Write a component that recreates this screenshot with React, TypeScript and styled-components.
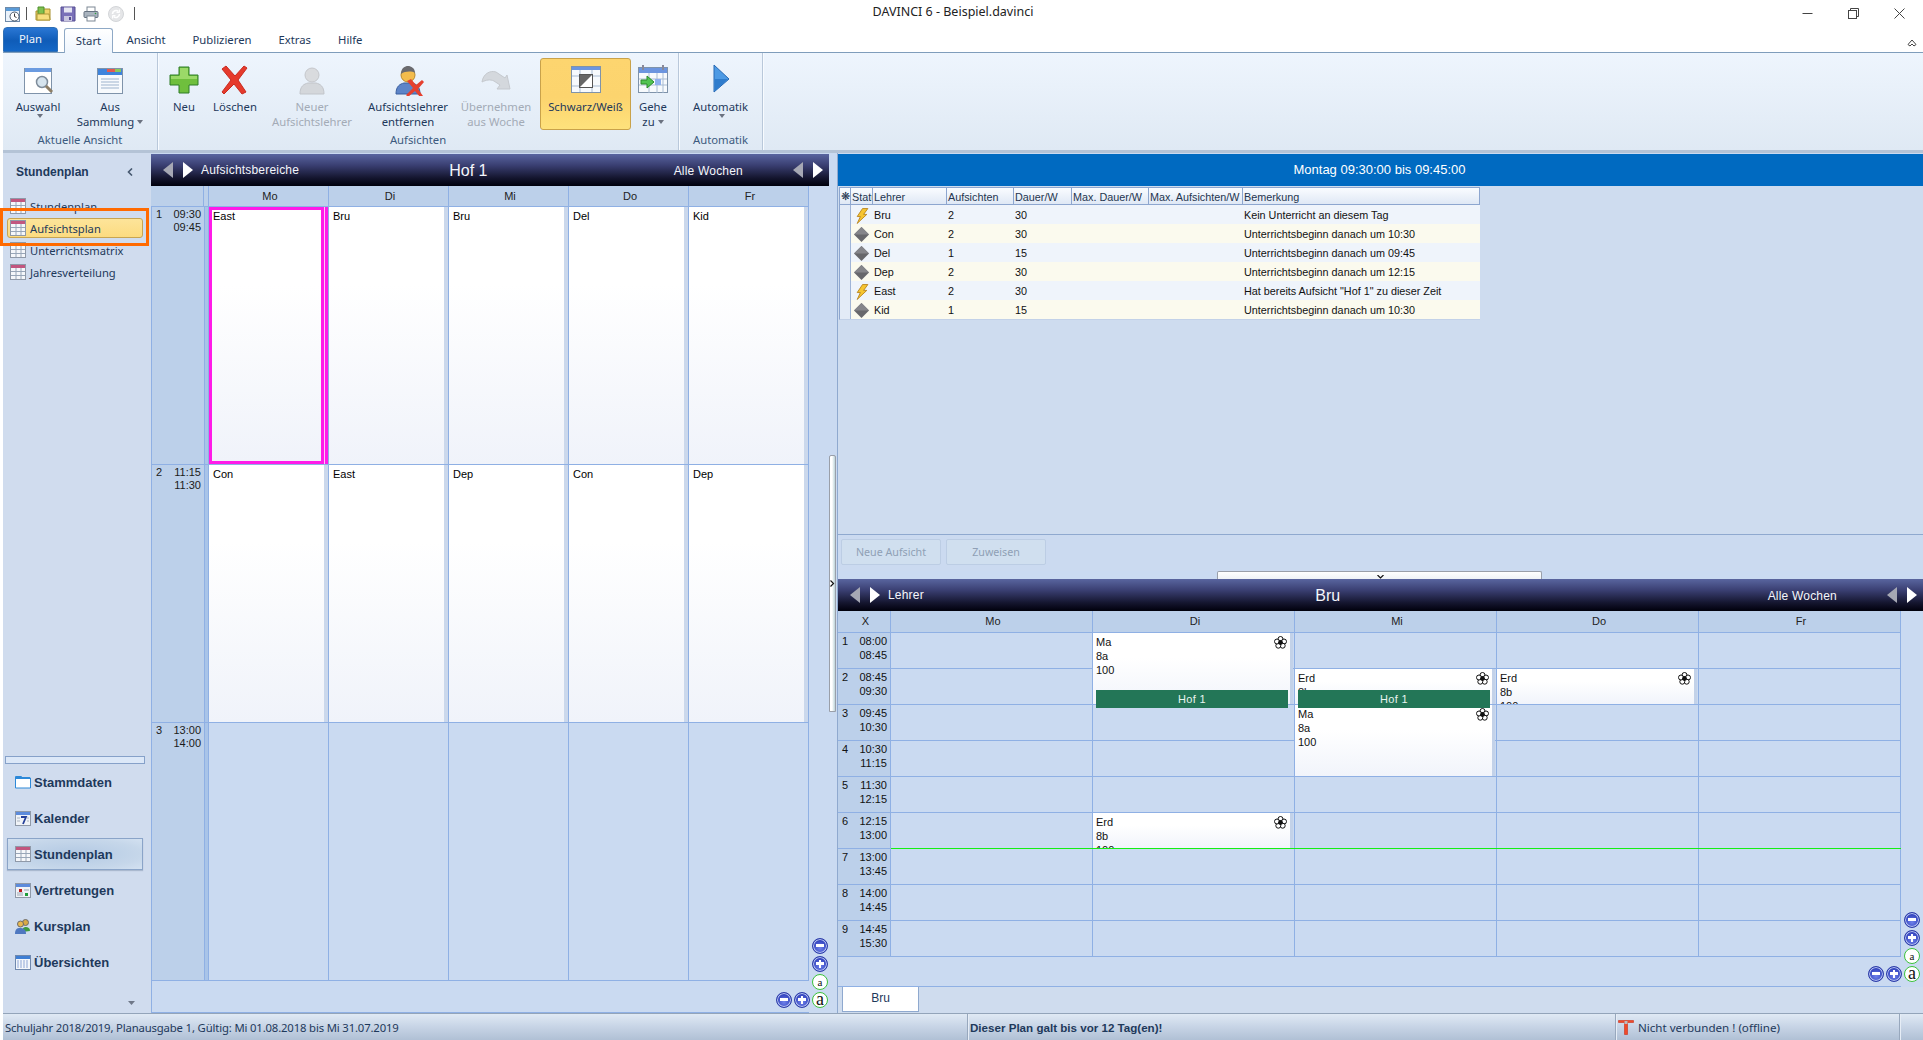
import React from "react";
import styled, { createGlobalStyle } from "styled-components";

const GlobalStyle = createGlobalStyle`
  html, body {
    margin: 0;
    padding: 0;
    width: 1923px;
    height: 1040px;
    overflow: hidden;
    background: #fff;
    font-family: "Liberation Sans", Arial, sans-serif;
  }
  * { box-sizing: border-box; }
`;

const uiFont = `"Noto Sans", "Liberation Sans", sans-serif`;
const gridLine = "#8fb0e4";
const gridBg = "#cadaf1";
const timeBg = "#bcd0ea";
const inkBlue = "#1e395b";

const Window = styled.div`
  width: 1923px;
  height: 1040px;
  display: flex;
  flex-direction: column;
  overflow: hidden;
`;

/* title bar */
const TitleBar = styled.div`
  height: 27px;
  display: flex;
  align-items: center;
  padding-left: 5px;
  position: relative;
  font-family: ${uiFont};
`;
const QuickIcon = styled.span<{ $gap?: number }>`
  display: flex;
  margin-left: ${(p) => p.$gap ?? 0}px;
`;
const QuickSep = styled.span<{ $gap: number }>`
  width: 1px;
  height: 13px;
  background: #555;
  margin-left: ${(p) => p.$gap}px;
`;
const TitleText = styled.div`
  position: absolute;
  left: 0;
  right: 17px;
  top: 3px;
  text-align: center;
  font-size: 12.5px;
  line-height: 18px;
  color: #222;
  pointer-events: none;
`;
const WindowButtons = styled.div`
  margin-left: auto;
  display: flex;
  align-items: center;
  gap: 35px;
  padding-right: 18px;
  margin-top: -1px;
`;

/* tabs */
const TabRow = styled.div`
  height: 25px;
  display: flex;
  align-items: flex-end;
  padding-left: 3px;
  font-family: ${uiFont};
  font-size: 11.3px;
  color: ${inkBlue};
  position: relative;
`;
const PlanTab = styled.div`
  width: 55px;
  height: 25px;
  margin-right: 6px;
  border-radius: 4px 4px 0 0;
  background: linear-gradient(#2a77d4, #0f5cb8 55%, #1467c6);
  border: 1px solid #2f6fb5;
  color: #f2f6fb;
  text-align: center;
  line-height: 21px;
`;
const StartTab = styled.div`
  width: 49px;
  height: 25px;
  margin-bottom: -1px;
  z-index: 1;
  background: linear-gradient(#fff, #eef5fd);
  border: 1px solid #8fa9c6;
  border-bottom: 0;
  border-radius: 3px 3px 0 0;
  text-align: center;
  line-height: 24px;
`;
const Tab = styled.div`
  padding: 0 13.5px;
  line-height: 24px;
`;
const CollapseIcon = styled.span`
  margin-left: auto;
  padding-right: 6px;
  display: flex;
  padding-bottom: 5px;
`;

/* ribbon */
const Ribbon = styled.div`
  height: 101px;
  margin-left: 3px;
  display: flex;
  background: linear-gradient(#eef5fd, #dfe9f4);
  border-top: 1px solid #7f9dbb;
  border-bottom: 3px solid #b4c3d6;
  font-family: ${uiFont};
  font-size: 11.3px;
  color: ${inkBlue};
`;
const RibbonGroup = styled.div<{ $w: number }>`
  width: ${(p) => p.$w}px;
  display: flex;
  flex-direction: column;
  padding-top: 5px;
  border-right: 1px solid #b9c8da;
  box-shadow: 1px 0 0 #f7fbff;
`;
const GroupButtons = styled.div`
  display: flex;
  height: 72px;
`;
const GroupLabel = styled.div`
  text-align: center;
  line-height: 16px;
  margin-top: 2px;
  color: #3c5a7e;
`;
const RibbonButton = styled.div<{ $w: number; $off?: boolean; $on?: boolean }>`
  width: ${(p) => p.$w}px;
  display: flex;
  flex-direction: column;
  align-items: center;
  padding-top: 6px;
  text-align: center;
  line-height: 15px;
  color: ${(p) => (p.$off ? "#a3abb6" : inkBlue)};
  border-radius: 3px;
  border: 1px solid ${(p) => (p.$on ? "#c9a24a" : "transparent")};
  background: ${(p) => (p.$on ? "linear-gradient(#fdd56f, #fcd46e 55%, #fee27c)" : "none")};
`;
const RibbonIcon = styled.span`
  height: 32px;
  margin-bottom: 3px;
  margin-top: -1px;
  display: flex;
`;
const Caret = styled.i`
  display: inline-block;
  width: 0;
  height: 0;
  margin-left: 3px;
  vertical-align: 2px;
  border: 3px solid transparent;
  border-top: 4px solid #6b7280;
  border-bottom: 0;
`;

/* main area */
const Main = styled.div`
  height: 860px;
  margin-left: 3px;
  display: flex;
`;

const Sidebar = styled.aside`
  width: 148px;
  display: flex;
  flex-direction: column;
  background: #d0dcee;
  color: ${inkBlue};
  position: relative;
`;
const SideHead = styled.div`
  height: 38px;
  padding: 0 18px 0 13px;
  display: flex;
  align-items: center;
  justify-content: space-between;
  font-size: 12px;
  font-weight: bold;
  margin-bottom: 4px;
`;
const PlanItem = styled.div<{ $on?: boolean }>`
  height: 22px;
  display: flex;
  align-items: center;
  gap: 4px;
  padding: 0 0 0 3px;
  margin: 0 8px 0 4px;
  font-family: ${uiFont};
  font-size: 11.2px;
  border-radius: 3px;
  ${(p) =>
    p.$on &&
    `height: 20px; margin-top: 1px; margin-bottom: 1px;
     background: linear-gradient(#fde49a, #fcdb80);
     border: 1px solid #c8a551; padding-left: 2px;`}
`;
const Annotation = styled.div`
  position: absolute;
  left: -3px;
  top: 55px;
  width: 149px;
  height: 38px;
  border: 3px solid #ff6a00;
  pointer-events: none;
`;
const Sash = styled.div`
  margin: auto 6px 0 2px;
  height: 8px;
  background: #dce8f8;
  border: 1px solid #86a1c9;
`;
const NavItem = styled.div<{ $on?: boolean }>`
  height: 32px;
  margin: 2px 8px 2px 4px;
  padding-left: 7px;
  display: flex;
  align-items: center;
  gap: 3px;
  font-size: 13px;
  font-weight: bold;
  border: 1px solid ${(p) => (p.$on ? "#8aa4c8" : "transparent")};
  background: ${(p) =>
    p.$on ? "radial-gradient(ellipse at center, #b3c9e3, #c6d7ea 70%, #d3e1f1)" : "none"};
  box-shadow: ${(p) => (p.$on ? "0 1px 1px #aab9cf" : "none")};
`;
const SideMore = styled.div`
  height: 33px;
  padding: 11px 0 0 125px;
`;

/* header band used by both schedule panels */
const Band = styled.div`
  height: 32px;
  display: flex;
  align-items: center;
  padding: 0 0 0 12px;
  background: linear-gradient(#59659f, #3a3f72 35%, #14152e 75%, #00000c);
  color: #f4f6fb;
  font-size: 12px;
`;
const BandArrow = styled.i<{ $left?: boolean; $off?: boolean }>`
  width: 0;
  height: 0;
  margin-right: 10px;
  border-top: 8px solid transparent;
  border-bottom: 8px solid transparent;
  ${(p) =>
    p.$left
      ? `border-right: 10px solid ${p.$off ? "#a6a8b4" : "#fff"};`
      : `border-left: 10px solid #fff;`}
`;
const BandSub = styled.span`
  margin-left: -2px;
  margin-top: -1px;
  letter-spacing: 0.2px;
`;
const BandTitle = styled.div`
  flex: 1;
  padding: 1px 36px 0 0;
  text-align: center;
  font-size: 16px;
`;
const BandWeeks = styled.span`
  margin: 1px 50px 0 0;
  letter-spacing: 0.2px;
`;
const ArrowPair = styled.span<{ $end?: boolean }>`
  display: flex;
  align-items: center;
  margin-right: ${(p) => (p.$end ? -4 : 0)}px;
`;

/* left schedule */
const LeftPanel = styled.section`
  width: 678px;
  padding-top: 1px;
  display: flex;
  flex-direction: column;
  background: ${gridBg};
  position: relative;
`;
const DutyGrid = styled.div`
  width: 658px;
  display: grid;
  grid-template-columns: 53px 5px repeat(5, 120px);
  grid-template-rows: 21px repeat(3, 258px);
  font-size: 11px;
`;
const DayHead = styled.div`
  background: ${timeBg};
  border-right: 1px solid ${gridLine};
  border-bottom: 1px solid ${gridLine};
  padding-left: 3px;
  text-align: center;
  line-height: 21px;
  font-size: 11px;
  color: #222;
`;
const TimeCell = styled.div`
  background: ${timeBg};
  border-left: 1px solid ${gridLine};
  border-bottom: 1px solid ${gridLine};
  display: flex;
  justify-content: space-between;
  padding: 1px 3px 0 4px;
  line-height: 13px;
  color: #1b1b1b;
  font-size: 11px;
`;
const TimeStack = styled.span`
  text-align: right;
`;
const Strip = styled.div`
  background: #a9c4e8;
  border-left: 1px solid ${gridLine};
  border-right: 1px solid ${gridLine};
  border-bottom: 1px solid ${gridLine};
`;
const DutyCell = styled.div<{ $sel?: boolean; $empty?: boolean }>`
  border-right: 1px solid ${gridLine};
  border-bottom: 1px solid ${gridLine};
  background: ${(p) => (p.$sel ? "#ff1be8" : p.$empty ? gridBg : "#cbd8ec")};
  padding-right: 4px;
  display: flex;
`;
const DutyInner = styled.div<{ $sel?: boolean; $empty?: boolean }>`
  flex: 1;
  padding: ${(p) => (p.$sel ? "0 1px" : "3px 4px")};
  line-height: 13px;
  background: ${(p) => (p.$empty ? "none" : "linear-gradient(#fff, #fff 30%, #f0f3fa)")};
  ${(p) => p.$sel && "border: 3px solid #ff1be8; box-shadow: 1px 0 0 #ffc6f6;"}
`;
const PanelFoot = styled.div`
  width: 658px;
  flex: 1;
  border-left: 1px solid ${gridLine};
  border-bottom: 1px solid ${gridLine};
`;
const ZoomCluster = styled.div<{ $right: number; $bottom: number }>`
  position: absolute;
  right: ${(p) => p.$right}px;
  bottom: ${(p) => p.$bottom}px;
  display: grid;
  grid-template-columns: repeat(3, 18px);
  grid-template-rows: repeat(4, 18px);
  justify-items: center;
  align-items: center;
`;
const ZoomButton = styled.div<{ $green?: boolean; $big?: boolean; $col: number; $row: number }>`
  grid-column: ${(p) => p.$col};
  grid-row: ${(p) => p.$row};
  width: 16px;
  height: 16px;
  border-radius: 50%;
  display: flex;
  align-items: center;
  justify-content: center;
  font-family: "Liberation Serif", serif;
  font-size: ${(p) => (p.$big ? 18 : 11)}px;
  line-height: 14px;
  color: #111;
  padding-bottom: ${(p) => (p.$big ? 3 : 1)}px;
  background: ${(p) =>
    p.$green ? "#fff" : "radial-gradient(circle at 50% 65%, #6f82ea, #2b3bb8 75%)"};
  border: 1.5px solid ${(p) => (p.$green ? "#3bc23b" : "#2b3aa8")};
  box-shadow: ${(p) => (p.$green ? "none" : "inset 0 0 0 1px #b9c6f2")};
`;
const SignBar = styled.i<{ $plus?: boolean }>`
  position: relative;
  width: 8px;
  height: 2.5px;
  background: #fff;
  &::after {
    content: "";
    display: ${(p) => (p.$plus ? "block" : "none")};
    position: absolute;
    left: 2.75px;
    top: -2.75px;
    width: 2.5px;
    height: 8px;
    background: #fff;
  }
`;

/* splitter */
const Splitter = styled.div`
  width: 8px;
  background: ${gridBg};
  padding-top: 302px;
`;
const SplitThumb = styled.div`
  width: 7px;
  height: 257px;
  border: 1px solid #9a9fa9;
  border-radius: 2px 2px 0 0;
  background: linear-gradient(90deg, #fff, #fff 40%, #bcd3d8);
  display: flex;
  align-items: flex-start;
  padding-top: 124px;
`;

/* right side */
const RightPanel = styled.section`
  flex: 1;
  padding-top: 1px;
  display: flex;
  flex-direction: column;
  background: ${gridBg};
  border-left: 1px solid #8fa9cf;
  position: relative;
`;
const InfoHead = styled.div`
  height: 32px;
  padding-right: 2px;
  background: #006ac1;
  color: #fff;
  font-size: 13px;
  line-height: 32px;
  text-align: center;
`;
const UpperPane = styled.div`
  height: 349px;
  padding: 1px 0 0 1px;
  background: #cedcef;
  border-bottom: 1px solid #8fa9cf;
`;
const TeacherTable = styled.table`
  width: 641px;
  table-layout: fixed;
  border-collapse: separate;
  border-spacing: 0;
  font-size: 10.8px;
  color: #111;
  border-left: 1px solid #8da6cf;
  border-bottom: 1px solid #c2d1e8;
`;
const HeadCell = styled.th<{ $w: number }>`
  width: ${(p) => p.$w}px;
  height: 18px;
  padding: 1px 0 0 1px;
  font-weight: normal;
  text-align: left;
  white-space: nowrap;
  overflow: hidden;
  background: linear-gradient(#fafcff, #dfe8f5);
  color: #24354f;
  border-top: 1px solid #8da6cf;
  border-right: 1px solid #8da6cf;
  border-bottom: 1px solid #8da6cf;
`;
const Row = styled.tr<{ $alt: boolean }>`
  height: 19px;
  background: ${(p) => (p.$alt ? "#fbfaee" : "#eff4fb")};
`;
const Td = styled.td`
  padding: 0 0 0 1px;
  white-space: nowrap;
  overflow: hidden;
`;
const RowMark = styled.td`
  padding: 0;
  background: #e3ebf7;
  border-right: 1px solid #9fb4d6;
`;
const StateTd = styled.td`
  padding: 2px 0 0 3px;
  line-height: 0;
`;
const ActionRow = styled.div`
  height: 36px;
  padding: 4px 0 0 3px;
  display: flex;
  gap: 5px;
  background: #cbdaf0;
`;
const GhostButton = styled.div`
  width: 100px;
  height: 26px;
  border: 1px solid #bccde4;
  border-radius: 2px;
  background: #d0dfef;
  color: #8f9fb5;
  font-family: ${uiFont};
  font-size: 10.7px;
  line-height: 24px;
  text-align: center;
`;
const PaneGrip = styled.div`
  width: 325px;
  height: 8px;
  margin-left: 379px;
  border: 1px solid #9a9fa9;
  border-bottom: 0;
  border-radius: 2px 2px 0 0;
  background: linear-gradient(#fff, #eef2f6);
  display: flex;
  justify-content: center;
  align-items: flex-end;
  padding-left: 2px;
`;
const WeekGrid = styled.div`
  width: 1063px;
  display: grid;
  grid-template-columns: 53px repeat(5, 202px);
  grid-template-rows: 22px repeat(9, 36px);
  font-size: 11px;
`;
const GridSlot = styled.div<{ $col: number; $row: number }>`
  grid-column: ${(p) => p.$col};
  grid-row: ${(p) => p.$row};
  border-right: 1px solid ${gridLine};
  border-bottom: 1px solid ${gridLine};
`;
const WeekHead = styled(GridSlot)`
  background: ${timeBg};
  padding-left: 3px;
  text-align: center;
  line-height: 21px;
  color: #222;
`;
const WeekTime = styled(GridSlot)`
  background: ${timeBg};
  display: flex;
  justify-content: space-between;
  padding: 1px 3px 0 4px;
  line-height: 14px;
  color: #111;
`;
const LessonCard = styled.div<{ $col: number; $row: number; $span?: number }>`
  grid-column: ${(p) => p.$col};
  grid-row: ${(p) => p.$row} / span ${(p) => p.$span ?? 1};
  height: ${(p) => 36 * (p.$span ?? 1) - 1}px;
  margin-right: 5px;
  padding: 2px 3px 0;
  line-height: 14px;
  color: #111;
  background: linear-gradient(#fff, #fff 35%, #f1f4fb);
  box-shadow: 3px 0 0 #c3d2e9;
  overflow: hidden;
  position: relative;
`;
const LessonMark = styled.span`
  position: absolute;
  right: 3px;
  top: 3px;
  display: flex;
`;
const DutyBar = styled.div<{ $col: number }>`
  grid-column: ${(p) => p.$col};
  grid-row: 3;
  align-self: start;
  height: 18px;
  margin: 21px 7px 0 3px;
  background: #237657;
  color: #e9f4ef;
  line-height: 18px;
  text-align: center;
  letter-spacing: 0.3px;
  z-index: 1;
`;
const NowLine = styled.div`
  grid-column: 2 / -1;
  grid-row: 8;
  align-self: start;
  height: 1px;
  margin-top: -1px;
  background: #14ef14;
  z-index: 1;
`;
const LowerFoot = styled.div`
  width: 1063px;
  height: 30px;
  border-bottom: 1px solid ${gridLine};
`;
const SheetTabs = styled.div`
  flex: 1;
  padding-left: 4px;
  background: #cfdcee;
  display: flex;
`;
const SheetTab = styled.div`
  width: 77px;
  height: 25px;
  background: #fff;
  border-right: 1px solid #8fa9cf;
  border-bottom: 1px solid #8fa9cf;
  border-left: 1px solid #8fa9cf;
  color: ${inkBlue};
  font-size: 12px;
  line-height: 23px;
  text-align: center;
`;

/* status bar */
const StatusBar = styled.footer`
  height: 27px;
  margin-left: 3px;
  display: flex;
  align-items: stretch;
  background: linear-gradient(#e0e9f4, #c9d6e7 45%, #b0c0d5);
  border-top: 1px solid #93a4b9;
  color: ${inkBlue};
  font-family: ${uiFont};
  font-size: 11.6px;
`;
const StatusCell = styled.div<{ $w?: number; $bold?: boolean; $rule?: boolean; $tight?: boolean }>`
  ${(p) => (p.$w ? `width: ${p.$w}px;` : "flex: 1;")}
  display: flex;
  align-items: center;
  padding-left: 2px;
  gap: 4px;
  white-space: nowrap;
  ${(p) => p.$tight && "font-size: 11.3px; letter-spacing: -0.15px;"}
  ${(p) => p.$bold && `font-family: "Liberation Sans", sans-serif; font-weight: bold;`}
  ${(p) => p.$rule && "border-left: 1px solid #98a8bd; box-shadow: inset 1px 0 0 #e6edf6;"}
`;

/* icons */
const Svg = ({ size, vb = 32, children }: { size: number; vb?: number; children: React.ReactNode }) => (
  <svg width={size} height={size} viewBox={`0 0 ${vb} ${vb}`}>
    {children}
  </svg>
);

const ClockPage = () => (
  <Svg size={16} vb={16}>
    <rect x="0.5" y="1.5" width="14" height="14" fill="#eaf2fb" stroke="#6f8aa8" />
    <rect x="1" y="2" width="13" height="3" fill="#5a9bd8" />
    <circle cx="9.5" cy="10.5" r="4.5" fill="#fff" stroke="#4a5a6c" />
    <path d="M9.5 7.5v3l2 1" stroke="#333" fill="none" />
  </Svg>
);
const FolderStar = () => (
  <Svg size={16} vb={16}>
    <path d="M1 5h5l1-2h8v11H1z" fill="#efd36a" stroke="#a8902c" />
    <path d="M3 1h6v7H3z" fill="#7fc04f" stroke="#4f8f2c" />
    <path d="M2 8h12l1 6H2z" fill="#f7df7f" stroke="#b09a3a" />
  </Svg>
);
const Floppy = () => (
  <Svg size={16} vb={16}>
    <path d="M1 1h14v14H1z" fill="#7a70b8" stroke="#554c92" />
    <rect x="4" y="1.5" width="8" height="5" fill="#e6e6f2" />
    <rect x="4" y="10" width="8" height="5" fill="#c9c6e0" />
    <rect x="9" y="11" width="2" height="3" fill="#554c92" />
  </Svg>
);
const Printer = () => (
  <Svg size={16} vb={16}>
    <rect x="4" y="1" width="8" height="5" fill="#fff" stroke="#7c8794" />
    <rect x="1" y="5.5" width="14" height="6" rx="1" fill="#aab4bf" stroke="#667280" />
    <rect x="4" y="10" width="8" height="5" fill="#fff" stroke="#7c8794" />
    <circle cx="12.5" cy="7.5" r="0.8" fill="#2e9c3e" />
  </Svg>
);
const Reload = () => (
  <Svg size={16} vb={16}>
    <circle cx="8" cy="8" r="7.5" fill="#e5e6e8" stroke="#d3d5d8" />
    <path d="M4.5 8a3.5 3.5 0 0 1 6-2.4M11.5 8a3.5 3.5 0 0 1-6 2.4" stroke="#fff" strokeWidth="1.6" fill="none" />
    <path d="M11.5 3.5v3h-3M4.5 12.5v-3h3" stroke="#fff" fill="none" />
  </Svg>
);
const WinMin = () => (
  <svg width="11" height="11" viewBox="0 0 11 11">
    <path d="M0.5 5.5h10" stroke="#444" />
  </svg>
);
const WinRestore = () => (
  <svg width="11" height="11" viewBox="0 0 11 11">
    <path d="M2.5 2.5v-2h8v8h-2" fill="none" stroke="#444" />
    <rect x="0.5" y="2.5" width="8" height="8" fill="none" stroke="#444" />
  </svg>
);
const WinClose = () => (
  <svg width="11" height="11" viewBox="0 0 11 11">
    <path d="M0.5 0.5l10 10M10.5 0.5l-10 10" stroke="#444" />
  </svg>
);
const CollapseChevron = () => (
  <svg width="10" height="8" viewBox="0 0 10 8">
    <path d="M1 5.5L5 1l4 4.5-2 1.5-2-2-2 2z" fill="#fff" stroke="#444" />
  </svg>
);

const ViewPick = () => (
  <Svg size={32}>
    <rect x="2.5" y="4.5" width="27" height="25" fill="#fff" stroke="#7f93aa" />
    <rect x="3" y="4" width="26" height="4" fill="#6b9be0" />
    <circle cx="20" cy="18" r="5.5" fill="#d6e4ee" stroke="#7e8c9a" strokeWidth="1.5" />
    <path d="M24 22l6 6" stroke="#8d7e66" strokeWidth="3" />
  </Svg>
);
const FromLibrary = () => (
  <Svg size={32}>
    <rect x="3.5" y="4.5" width="25" height="25" fill="#f7fafd" stroke="#7f93aa" />
    <rect x="4" y="5" width="24" height="6" fill="#3f84dc" />
    <rect x="13" y="5" width="8" height="3" fill="#e35a52" />
    <rect x="21" y="5" width="6" height="3" fill="#8cc95a" />
    <path d="M7 15h18M7 18h18M7 21h18M7 24h18" stroke="#9db3cd" />
  </Svg>
);
const PlusIcon = () => (
  <Svg size={32}>
    <path d="M11 3h10v8h9v10h-9v8H11v-8H2V11h9z" fill="#6fbf3d" stroke="#2f7d28" />
    <path d="M12 4h8v8h9v3H3v-3h9z" fill="#9bd968" />
  </Svg>
);
const CrossIcon = () => (
  <Svg size={32}>
    <path d="M3 5l4-3 9 10 9-10 3 2-9 12 8 12-4 2-8-10-10 10-2-2 9-12z" fill="#e53a2c" stroke="#c92a1f" />
  </Svg>
);
const PersonIcon = ({ gray }: { gray?: boolean }) => (
  <>
    <path
      d="M4 30c0-8 4-10 8-11h8c4 1 8 3 8 11z"
      fill={gray ? "#d4d7db" : "#5d84c8"}
      stroke={gray ? "#c2c5ca" : "#3a5f9e"}
    />
    <circle cx="16" cy="11" r="7" fill={gray ? "#d9dbde" : "#f3bc4c"} stroke={gray ? "#c5c7cb" : "#b98a2c"} />
    {!gray && <path d="M9 10c0-6 4-8 7-8s7 2 7 7c-3-2-10-2-14 1z" fill="#6a6a6e" />}
  </>
);
const NewPerson = () => (
  <Svg size={32}>
    <PersonIcon gray />
  </Svg>
);
const RemovePerson = () => (
  <Svg size={32}>
    <PersonIcon />
    <path d="M15 17l4 -2 5 6 6-5 2 2-6 7 5 7-3 1-5-6-7 6-2-2 7-7z" fill="#e5402f" />
  </Svg>
);
const CopyWeek = () => (
  <Svg size={32}>
    <path
      d="M2 18c1-8 8-12 14-10l9 6 2-3 3 14-13 0 3-4-6-4c-4-2-8-1-12 1z"
      fill="#d4d8dd"
      stroke="#c5c9ce"
    />
  </Svg>
);
const BlackWhite = () => (
  <Svg size={32}>
    <rect x="1.5" y="2.5" width="29" height="26" fill="#f7fafd" stroke="#7f93aa" />
    <rect x="2" y="3" width="28" height="3" fill="#6c95df" />
    <path d="M10 6v22M22 6v22M2 12h28M2 22h28" stroke="#a9bcd3" />
    <rect x="9.5" y="10.5" width="13" height="13" fill="#fff" stroke="#555" />
    <path d="M10 23V11h12z" fill="#666" />
  </Svg>
);
const GotoDay = () => (
  <Svg size={32}>
    <rect x="1.5" y="3.5" width="29" height="25" fill="#f7fafd" stroke="#7f93aa" />
    <rect x="2" y="4" width="28" height="5" fill="#6c95df" />
    <rect x="5" y="1" width="2" height="5" fill="#889" />
    <rect x="25" y="1" width="2" height="5" fill="#889" />
    <path d="M2 15h28M2 21h28M12 9v20M20 9v20M26 9v20" stroke="#a9bcd3" />
    <rect x="18" y="15" width="6" height="6" fill="#8fb0ee" />
    <path d="M4 16h6v-4l7 6-7 6v-4H4z" fill="#52c452" stroke="#2a8a2a" />
  </Svg>
);
const AutoPlay = () => (
  <Svg size={32}>
    <path d="M9 1l15 14L9 28z" fill="#4d9ae4" stroke="#2668b4" />
    <path d="M10 15h13L10 27z" fill="#2f7ccc" />
  </Svg>
);

const GridIcon = () => (
  <Svg size={16} vb={16}>
    <rect x="0.5" y="0.5" width="15" height="15" fill="#f5f7fa" stroke="#8f99a8" />
    <rect x="1" y="1" width="14" height="3" fill="#c2567f" />
    <path d="M1 7.5h14M1 11.5h14M6 4v11M11 4v11" stroke="#98a6b8" />
  </Svg>
);
const FolderIcon = () => (
  <Svg size={16} vb={16}>
    <path d="M0.5 2.5h6l1 1.5h8v10h-15z" fill="#fff" stroke="#2d89d8" />
    <rect x="1" y="3" width="14" height="2" fill="#2d89d8" />
  </Svg>
);
const SevenIcon = () => (
  <Svg size={16} vb={16}>
    <rect x="0.5" y="1.5" width="15" height="14" fill="#f0f3f7" stroke="#8f99a8" />
    <rect x="1" y="2" width="14" height="3" fill="#5c8bdc" />
    <path d="M6 7h5l-3 7" stroke="#24409a" strokeWidth="1.8" fill="none" />
    <path d="M2 8h3M2 11h3M12 8h2M12 11h2" stroke="#a9b3c0" />
  </Svg>
);
const CoverIcon = () => (
  <Svg size={16} vb={16}>
    <rect x="0.5" y="1.5" width="15" height="14" fill="#f0f3f7" stroke="#8f99a8" />
    <rect x="1" y="2" width="14" height="3" fill="#5c8bdc" />
    <rect x="4" y="7" width="3" height="3" fill="#c01c1c" />
    <rect x="10" y="11" width="3" height="3" fill="#1f9d3a" />
    <path d="M2 11h6M2 13h6M9 8h5" stroke="#9aa5b3" />
  </Svg>
);
const CourseIcon = () => (
  <Svg size={16} vb={16}>
    <circle cx="10.5" cy="4.5" r="3" fill="#d8a945" stroke="#6b6b6b" />
    <path d="M7 14c0-4 2-5 4-5s4 1 4 4z" fill="#3f9c3f" />
    <circle cx="5.5" cy="6" r="3" fill="#e8b850" stroke="#6b6b6b" />
    <path d="M0 16c0-5 2-6 5-6s6 1 6 6z" fill="#4f78c0" />
  </Svg>
);
const OverviewIcon = () => (
  <Svg size={16} vb={16}>
    <rect x="0.5" y="1.5" width="15" height="14" fill="#f4f7fb" stroke="#6f88ad" />
    <rect x="1" y="2" width="14" height="3" fill="#3f7fd4" />
    <path d="M2 7h12M2 9h12M2 11h12M2 13h12" stroke="#8ea6d6" strokeDasharray="2 1" />
  </Svg>
);
const ChevronLeft = () => (
  <svg width="6" height="8" viewBox="0 0 6 8">
    <path d="M5 0.5L1.5 4 5 7.5" stroke="#46586f" strokeWidth="1.6" fill="none" />
  </svg>
);
const MoreCaret = () => (
  <svg width="7" height="4" viewBox="0 0 7 4">
    <path d="M0 0h7L3.5 4z" fill="#6f7888" />
  </svg>
);
const SplitChevron = () => (
  <svg width="5" height="7" viewBox="0 0 5 7">
    <path d="M0.5 0.5L3.5 3.5 0.5 6.5" stroke="#111" strokeWidth="1.2" fill="none" />
  </svg>
);
const GripChevron = () => (
  <svg width="7" height="4" viewBox="0 0 7 4">
    <path d="M0.5 0L3.5 3 6.5 0" stroke="#111" strokeWidth="1.2" fill="none" />
  </svg>
);
const Bolt = () => (
  <Svg size={16} vb={15}>
    <path d="M8 0.5h5L9 6h3L3 14.5 6 8H3z" fill="#f6c531" stroke="#b5801a" strokeWidth="0.8" />
  </Svg>
);
const Diamond = () => (
  <Svg size={15} vb={15}>
    <path d="M7.5 0L15 7.5 7.5 15 0 7.5z" fill="#67676b" />
    <path d="M7.5 0L15 7.5H0z" fill="#85858a" />
  </Svg>
);
const Flower = () => (
  <Svg size={13} vb={13}>
    <g fill="#fff" stroke="#111" strokeWidth="1">
      <circle cx="6.5" cy="3" r="2.5" />
      <circle cx="10" cy="5.5" r="2.5" />
      <circle cx="8.7" cy="9.7" r="2.5" />
      <circle cx="4.3" cy="9.7" r="2.5" />
      <circle cx="3" cy="5.5" r="2.5" />
    </g>
    <circle cx="6.5" cy="6.5" r="2.4" fill="#111" />
  </Svg>
);
const OfflineIcon = () => (
  <Svg size={16} vb={16}>
    <path d="M0.5 1.5h15v2h-6v12h-3v-12h-6z" fill="#f04a2a" stroke="#c92f1a" strokeWidth="0.6" />
    <rect x="6.5" y="2" width="3" height="3" fill="#b9bcc0" />
  </Svg>
);

/* data */
const days = ["Mo", "Di", "Mi", "Do", "Fr"];
const dutySlots = [
  { no: 1, from: "09:30", to: "09:45", names: ["East", "Bru", "Bru", "Del", "Kid"] },
  { no: 2, from: "11:15", to: "11:30", names: ["Con", "East", "Dep", "Con", "Dep"] },
  { no: 3, from: "13:00", to: "14:00", names: ["", "", "", "", ""] },
];
const teachers = [
  { icon: "bolt", name: "Bru", n: 2, d: 30, note: "Kein Unterricht an diesem Tag" },
  { icon: "gem", name: "Con", n: 2, d: 30, note: "Unterrichtsbeginn danach um 10:30" },
  { icon: "gem", name: "Del", n: 1, d: 15, note: "Unterrichtsbeginn danach um 09:45" },
  { icon: "gem", name: "Dep", n: 2, d: 30, note: "Unterrichtsbeginn danach um 12:15" },
  { icon: "bolt", name: "East", n: 2, d: 30, note: 'Hat bereits Aufsicht "Hof 1" zu dieser Zeit' },
  { icon: "gem", name: "Kid", n: 1, d: 15, note: "Unterrichtsbeginn danach um 10:30" },
];
const tableCols: [string, number][] = [
  ["❋", 11],
  ["Status", 22],
  ["Lehrer", 74],
  ["Aufsichten", 67],
  ["Dauer/W", 58],
  ["Max. Dauer/W", 77],
  ["Max. Aufsichten/W", 94],
  ["Bemerkung", 237],
];
const lessonTimes = [
  ["08:00", "08:45"],
  ["08:45", "09:30"],
  ["09:45", "10:30"],
  ["10:30", "11:15"],
  ["11:30", "12:15"],
  ["12:15", "13:00"],
  ["13:00", "13:45"],
  ["14:00", "14:45"],
  ["14:45", "15:30"],
];
const lessons = [
  { col: 3, row: 2, span: 2, lines: ["Ma", "8a", "100"] },
  { col: 4, row: 3, span: 1, lines: ["Erd", "8b", "100"] },
  { col: 5, row: 3, span: 1, lines: ["Erd", "8b", "100"] },
  { col: 4, row: 4, span: 2, lines: ["Ma", "8a", "100"] },
  { col: 3, row: 7, span: 1, lines: ["Erd", "8b", "100"] },
];

const BandArrows = ({ end }: { end?: boolean }) => (
  <ArrowPair $end={end}>
    <BandArrow $left $off />
    <BandArrow />
  </ArrowPair>
);

const ZoomSet = ({ right, bottom }: { right: number; bottom: number }) => (
  <ZoomCluster $right={right} $bottom={bottom}>
    <ZoomButton $col={3} $row={1}>
      <SignBar />
    </ZoomButton>
    <ZoomButton $col={3} $row={2}>
      <SignBar $plus />
    </ZoomButton>
    <ZoomButton $col={3} $row={3} $green>
      a
    </ZoomButton>
    <ZoomButton $col={1} $row={4}>
      <SignBar />
    </ZoomButton>
    <ZoomButton $col={2} $row={4}>
      <SignBar $plus />
    </ZoomButton>
    <ZoomButton $col={3} $row={4} $green $big>
      a
    </ZoomButton>
  </ZoomCluster>
);

const planItems = ["Stundenplan", "Aufsichtsplan", "Unterrichtsmatrix", "Jahresverteilung"];

export default function App() {
  return (
    <Window>
      <GlobalStyle />
      <TitleBar>
        <ClockPage />
        <QuickSep $gap={5} />
        <QuickIcon $gap={8}>
          <FolderStar />
        </QuickIcon>
        <QuickIcon $gap={9}>
          <Floppy />
        </QuickIcon>
        <QuickIcon $gap={7}>
          <Printer />
        </QuickIcon>
        <QuickIcon $gap={9}>
          <Reload />
        </QuickIcon>
        <QuickSep $gap={10} />
        <TitleText>DAVINCI 6 - Beispiel.davinci</TitleText>
        <WindowButtons>
          <WinMin />
          <WinRestore />
          <WinClose />
        </WindowButtons>
      </TitleBar>

      <TabRow>
        <PlanTab>Plan</PlanTab>
        <StartTab>Start</StartTab>
        <Tab>Ansicht</Tab>
        <Tab>Publizieren</Tab>
        <Tab>Extras</Tab>
        <Tab>Hilfe</Tab>
        <CollapseIcon>
          <CollapseChevron />
        </CollapseIcon>
      </TabRow>

      <Ribbon>
        <RibbonGroup $w={155}>
          <GroupButtons>
            <RibbonButton $w={70}>
              <RibbonIcon>
                <ViewPick />
              </RibbonIcon>
              Auswahl
              <Caret />
            </RibbonButton>
            <RibbonButton $w={74}>
              <RibbonIcon>
                <FromLibrary />
              </RibbonIcon>
              Aus
              <span>
                Sammlung
                <Caret />
              </span>
            </RibbonButton>
          </GroupButtons>
          <GroupLabel>Aktuelle Ansicht</GroupLabel>
        </RibbonGroup>
        <RibbonGroup $w={521}>
          <GroupButtons>
            <RibbonButton $w={52}>
              <RibbonIcon>
                <PlusIcon />
              </RibbonIcon>
              Neu
            </RibbonButton>
            <RibbonButton $w={50}>
              <RibbonIcon>
                <CrossIcon />
              </RibbonIcon>
              Löschen
            </RibbonButton>
            <RibbonButton $w={104} $off>
              <RibbonIcon>
                <NewPerson />
              </RibbonIcon>
              Neuer
              <br />
              Aufsichtslehrer
            </RibbonButton>
            <RibbonButton $w={88}>
              <RibbonIcon>
                <RemovePerson />
              </RibbonIcon>
              Aufsichtslehrer
              <br />
              entfernen
            </RibbonButton>
            <RibbonButton $w={88} $off>
              <RibbonIcon>
                <CopyWeek />
              </RibbonIcon>
              Übernehmen
              <br />
              aus Woche
            </RibbonButton>
            <RibbonButton $w={91} $on>
              <RibbonIcon>
                <BlackWhite />
              </RibbonIcon>
              Schwarz/Weiß
            </RibbonButton>
            <RibbonButton $w={44}>
              <RibbonIcon>
                <GotoDay />
              </RibbonIcon>
              Gehe
              <span>
                zu
                <Caret />
              </span>
            </RibbonButton>
          </GroupButtons>
          <GroupLabel>Aufsichten</GroupLabel>
        </RibbonGroup>
        <RibbonGroup $w={84}>
          <GroupButtons>
            <RibbonButton $w={84}>
              <RibbonIcon>
                <AutoPlay />
              </RibbonIcon>
              Automatik
              <Caret />
            </RibbonButton>
          </GroupButtons>
          <GroupLabel>Automatik</GroupLabel>
        </RibbonGroup>
      </Ribbon>

      <Main>
        <Sidebar>
          <SideHead>
            Stundenplan
            <ChevronLeft />
          </SideHead>
          {planItems.map((item) => (
            <PlanItem key={item} $on={item === "Aufsichtsplan"}>
              <GridIcon />
              {item}
            </PlanItem>
          ))}
          <Annotation />
          <Sash />
          <NavItem>
            <FolderIcon />
            Stammdaten
          </NavItem>
          <NavItem>
            <SevenIcon />
            Kalender
          </NavItem>
          <NavItem $on>
            <GridIcon />
            Stundenplan
          </NavItem>
          <NavItem>
            <CoverIcon />
            Vertretungen
          </NavItem>
          <NavItem>
            <CourseIcon />
            Kursplan
          </NavItem>
          <NavItem>
            <OverviewIcon />
            Übersichten
          </NavItem>
          <SideMore>
            <MoreCaret />
          </SideMore>
        </Sidebar>

        <LeftPanel>
          <Band>
            <BandArrows />
            <BandSub>Aufsichtsbereiche</BandSub>
            <BandTitle>Hof 1</BandTitle>
            <BandWeeks>Alle Wochen</BandWeeks>
            <BandArrows end />
          </Band>
          <DutyGrid>
            <DayHead />
            <DayHead />
            {days.map((d) => (
              <DayHead key={d}>{d}</DayHead>
            ))}
            {dutySlots.map((slot) => (
              <React.Fragment key={slot.no}>
                <TimeCell>
                  <span>{slot.no}</span>
                  <TimeStack>
                    {slot.from}
                    <br />
                    {slot.to}
                  </TimeStack>
                </TimeCell>
                <Strip />
                {slot.names.map((name, i) => {
                  const sel = slot.no === 1 && i === 0;
                  return (
                    <DutyCell key={i} $sel={sel} $empty={!name}>
                      <DutyInner $sel={sel} $empty={!name}>
                        {name}
                      </DutyInner>
                    </DutyCell>
                  );
                })}
              </React.Fragment>
            ))}
          </DutyGrid>
          <PanelFoot />
          <ZoomSet right={0} bottom={4} />
        </LeftPanel>

        <Splitter>
          <SplitThumb>
            <SplitChevron />
          </SplitThumb>
        </Splitter>

        <RightPanel>
          <InfoHead>Montag 09:30:00 bis 09:45:00</InfoHead>
          <UpperPane>
            <TeacherTable>
              <thead>
                <tr>
                  {tableCols.map(([label, w]) => (
                    <HeadCell key={label} $w={w}>
                      {label}
                    </HeadCell>
                  ))}
                </tr>
              </thead>
              <tbody>
                {teachers.map((t, i) => (
                  <Row key={t.name} $alt={i % 2 === 1}>
                    <RowMark />
                    <StateTd>{t.icon === "bolt" ? <Bolt /> : <Diamond />}</StateTd>
                    <Td>{t.name}</Td>
                    <Td>{t.n}</Td>
                    <Td>{t.d}</Td>
                    <Td />
                    <Td />
                    <Td>{t.note}</Td>
                  </Row>
                ))}
              </tbody>
            </TeacherTable>
          </UpperPane>
          <ActionRow>
            <GhostButton>Neue Aufsicht</GhostButton>
            <GhostButton>Zuweisen</GhostButton>
          </ActionRow>
          <PaneGrip>
            <GripChevron />
          </PaneGrip>
          <Band>
            <BandArrows />
            <BandSub>Lehrer</BandSub>
            <BandTitle>Bru</BandTitle>
            <BandWeeks>Alle Wochen</BandWeeks>
            <BandArrows end />
          </Band>
          <WeekGrid>
            <WeekHead $col={1} $row={1}>
              X
            </WeekHead>
            {days.map((d, i) => (
              <WeekHead key={d} $col={i + 2} $row={1}>
                {d}
              </WeekHead>
            ))}
            {lessonTimes.map(([from, to], r) => (
              <React.Fragment key={r}>
                <WeekTime $col={1} $row={r + 2}>
                  <span>{r + 1}</span>
                  <TimeStack>
                    {from}
                    <br />
                    {to}
                  </TimeStack>
                </WeekTime>
                {days.map((d, c) => (
                  <GridSlot key={d} $col={c + 2} $row={r + 2} />
                ))}
              </React.Fragment>
            ))}
            {lessons.map((l) => (
              <LessonCard key={`${l.col}-${l.row}`} $col={l.col} $row={l.row} $span={l.span}>
                {l.lines.map((line, i) => (
                  <div key={i}>{line}</div>
                ))}
                <LessonMark>
                  <Flower />
                </LessonMark>
              </LessonCard>
            ))}
            <DutyBar $col={3}>Hof 1</DutyBar>
            <DutyBar $col={4}>Hof 1</DutyBar>
            <NowLine />
          </WeekGrid>
          <LowerFoot />
          <SheetTabs>
            <SheetTab>Bru</SheetTab>
          </SheetTabs>
          <ZoomSet right={2} bottom={30} />
        </RightPanel>
      </Main>

      <StatusBar>
        <StatusCell $w={964} $tight>
          Schuljahr 2018/2019, Planausgabe 1, Gültig: Mi 01.08.2018 bis Mi 31.07.2019
        </StatusCell>
        <StatusCell $w={648} $bold $rule>
          Dieser Plan galt bis vor 12 Tag(en)!
        </StatusCell>
        <StatusCell $w={284} $rule>
          <OfflineIcon />
          Nicht verbunden ! (offline)
        </StatusCell>
        <StatusCell $rule />
      </StatusBar>
    </Window>
  );
}
